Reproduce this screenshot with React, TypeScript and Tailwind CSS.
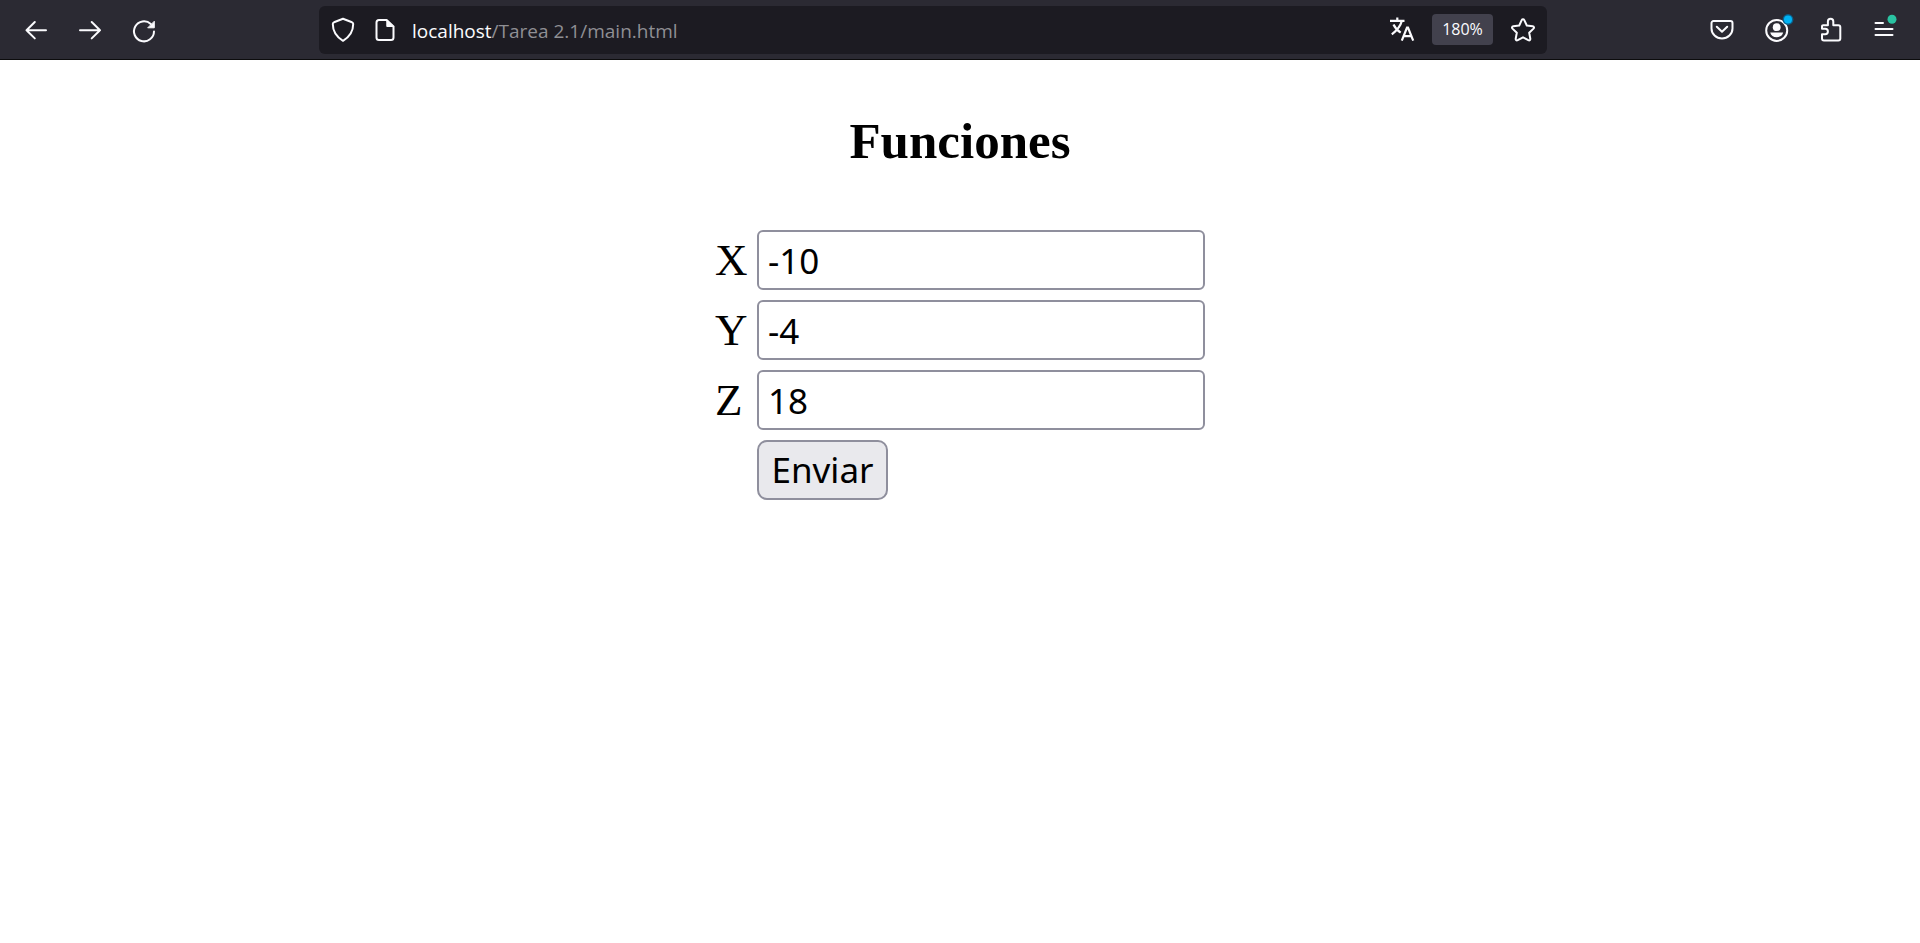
import type { ReactNode } from "react";

const ICON = "h-6 w-6 overflow-visible";

function ToolButton({ label, children }: { label: string; children: ReactNode }) {
  return (
    <button type="button" aria-label={label} className="flex h-12 w-[54px] items-center justify-center">
      <svg viewBox="0 0 24 24" fill="none" stroke="currentColor" strokeWidth="2" strokeLinecap="round" strokeLinejoin="round" className={ICON}>
        {children}
      </svg>
    </button>
  );
}

function BarButton({ label, children }: { label: string; children: ReactNode }) {
  return (
    <button type="button" aria-label={label} className="flex h-9 w-[42px] items-center justify-center">
      <svg viewBox="0 0 24 24" fill="none" stroke="currentColor" strokeWidth="2" strokeLinecap="round" strokeLinejoin="round" className={ICON}>
        {children}
      </svg>
    </button>
  );
}

function Toolbar() {
  return (
    <header className="flex h-[60px] items-center border-b border-[#0c0c0d] bg-[#2b2a33] px-[9px] text-[#fbfbfe]">
      <nav aria-label="Navegación" className="flex">
        <ToolButton label="Atrás">
          <path d="M22 12.200H2.500M10.800 4 2.500 12.200l8.300 8.200" />
        </ToolButton>
        <ToolButton label="Adelante">
          <path d="M2 12.200h20M13.700 4 22 12.200l-8.300 8.200" />
        </ToolButton>
        <ToolButton label="Recargar">
          <path d="M22 13.500A10 10 0 1 1 18.800 6" />
          <path d="M22.300 3.600v6.200h-6.200z" fill="currentColor" strokeWidth="1" />
        </ToolButton>
      </nav>

      <div className="mx-[148px] flex h-12 min-w-0 flex-1 items-center rounded-md bg-[#1c1b22] px-[3px]">
        <BarButton label="Protección">
          <path d="M12 .8 21 4.300c.9.4 1.200.9 1.200 1.800 0 7.200-3.200 12.600-10.200 16.700C5 18.700 1.800 13.300 1.800 6.100c0-.9.3-1.400 1.200-1.800z" />
        </BarButton>
        <BarButton label="Información del sitio">
          <path d="M13.500 2H6a2.500 2.500 0 0 0-2.500 2.500v15A2.500 2.500 0 0 0 6 22h12a2.500 2.500 0 0 0 2.500-2.500V8.500z" />
          <path d="M13.800 2v6.500h6.500z" fill="currentColor" strokeWidth="1" />
        </BarButton>
        <p className="ml-[6px] min-w-0 flex-1 truncate pt-[2px] font-['Open_Sans','Noto_Sans',sans-serif] text-[19px] leading-[28px] text-[#8f8f94]">
          <span className="text-[#fbfbfe]">localhost</span>/Tarea 2.1/main.html
        </p>
        <BarButton label="Traducir">
          <g strokeWidth="2.200" strokeLinecap="butt" strokeLinejoin="miter">
            <path d="M0 2.800h14.500M7.300-.5v3.300M11.800 3C10.500 8.200 7 12.400 1.800 16.400M3.500 6.500c1.500 3.500 4 6 7.200 8.200" />
            <path d="m11.800 22.700 5.200-13.200h1l5.200 13.200M13.700 18.200h7.600" />
          </g>
        </BarButton>
        <button type="button" className="mx-[9px] h-[31px] w-[61px] rounded bg-[#42414d] font-['Open_Sans','Noto_Sans',sans-serif] text-[16px] leading-[31px]">
          180%
        </button>
        <BarButton label="Marcador">
          <path d="M12 1.200c.6 0 1 .3 1.300.9l2.500 5.400 5.900.8c1.400.2 1.700 1.400.8 2.300l-4.300 4.100 1.100 6c.2 1.400-.8 2.100-2 1.500L12 19.300l-5.300 2.900c-1.200.6-2.200-.1-2-1.500l1.100-6-4.300-4.100c-.9-.9-.6-2.100.8-2.300l5.900-.8 2.500-5.400c.3-.6.7-.9 1.300-.9z" />
        </BarButton>
      </div>

      <div className="flex">
        <ToolButton label="Pocket">
          <path d="M3.500 3h17a2 2 0 0 1 2 2v5.500a10.500 10 0 0 1-21 0V5a2 2 0 0 1 2-2z" />
          <path d="m6.800 8.800 5.200 5 5.200-5" />
        </ToolButton>
        <ToolButton label="Cuenta">
          <circle cx="12.700" cy="12.400" r="10.500" />
          <circle cx="12.700" cy="9.200" r="3.900" fill="currentColor" stroke="none" />
          <path d="M6.200 14.500h13c-.8 3-3 4.700-6.500 4.700s-5.700-1.700-6.500-4.700z" fill="currentColor" stroke="none" />
          <circle cx="24" cy="1.500" r="5.400" fill="#0b618d" stroke="none" />
          <circle cx="24" cy="1.500" r="4" fill="#00b3f4" stroke="none" />
        </ToolButton>
        <ToolButton label="Extensiones">
          <path d="M5.200 7.200h4.700V3.500a2.700 2.700 0 0 1 5.400 0v3.700h5a2 2 0 0 1 2 2v11.300a2 2 0 0 1-2 2H6a2 2 0 0 1-2-2v-4.300h3.200a2.700 2.700 0 0 0 0-5.400H4V8.400a1.200 1.200 0 0 1 1.200-1.200z" />
        </ToolButton>
        <ToolButton label="Menú">
          <path d="M3.500 5h7.500M3.500 11h17M3.500 17h17" />
          <circle cx="20" cy="1.300" r="4.500" fill="#2ac3a2" stroke="none" />
        </ToolButton>
      </div>
    </header>
  );
}

const FIELDS = [
  { name: "X", value: "-10" },
  { name: "Y", value: "-4" },
  { name: "Z", value: "18" },
];

export default function App() {
  return (
    <div className="min-h-screen bg-white text-black">
      <Toolbar />
      <main className="flex flex-col items-center pt-[51px]">
        <h1 className="font-['Liberation_Serif',serif] text-[51px] leading-[60px] font-bold">Funciones</h1>
        <form className="mt-[59px] grid grid-cols-[42px_448px] gap-y-[10px]" onSubmit={(e) => e.preventDefault()}>
          {FIELDS.map((f) => (
            <div key={f.name} className="contents">
              <label htmlFor={f.name} className="font-['Liberation_Serif',serif] text-[45px] leading-[60px]">
                {f.name}
              </label>
              <input
                id={f.name}
                name={f.name}
                defaultValue={f.value}
                className="h-[60px] w-full rounded-md border-2 border-[#8f8f9d] bg-white px-[9px] font-['Noto_Sans',sans-serif] text-[35px]"
              />
            </div>
          ))}
          <button
            type="submit"
            className="col-start-2 h-[60px] w-[131px] rounded-[10px] border-2 border-[#8f8f9d] bg-[#e9e9ed] font-['Noto_Sans',sans-serif] text-[35px] leading-[56px]"
          >
            Enviar
          </button>
        </form>
      </main>
    </div>
  );
}
